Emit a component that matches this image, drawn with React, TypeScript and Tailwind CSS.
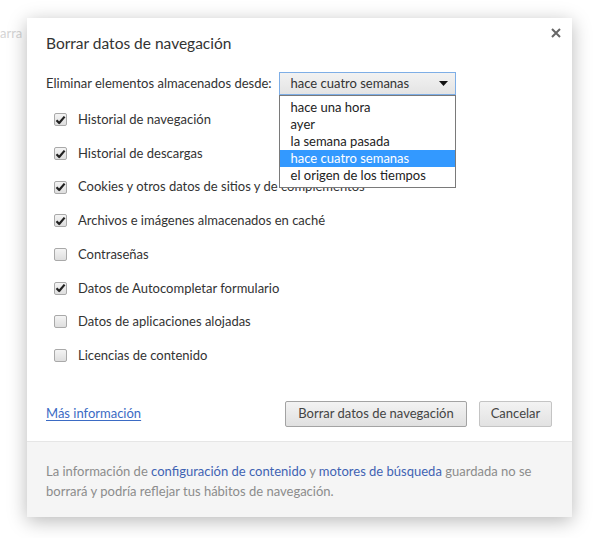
import React from 'react';

const items = [
  { label: 'Historial de navegación', checked: true },
  { label: 'Historial de descargas', checked: true },
  { label: 'Cookies y otros datos de sitios y de complementos', checked: true },
  { label: 'Archivos e imágenes almacenados en caché', checked: true },
  { label: 'Contraseñas', checked: false },
  { label: 'Datos de Autocompletar formulario', checked: true },
  { label: 'Datos de aplicaciones alojadas', checked: false },
  { label: 'Licencias de contenido', checked: false },
];

const options = [
  'hace una hora',
  'ayer',
  'la semana pasada',
  'hace cuatro semanas',
  'el origen de los tiempos',
];

const Checkbox: React.FC<{ checked: boolean }> = ({ checked }) => (
  <span className="flex h-[13px] w-[13px] shrink-0 items-center justify-center rounded-[2px] border border-[#a9a9a9] bg-gradient-to-b from-[#f4f4f4] to-[#dedede]">
    {checked && (
      <svg width="11" height="10" viewBox="0 0 11 10">
        <path d="M1.5 5.2 L4.2 8 L9.6 1.6" fill="none" stroke="#222" strokeWidth="2.2" strokeLinejoin="round" />
      </svg>
    )}
  </span>
);

export default function App() {
  return (
    <div className="relative h-[538px] w-[600px] overflow-hidden bg-white font-['Lato','Liberation_Sans',sans-serif] text-[13px] text-[#333]">
      <span className="absolute left-0 top-[24px] text-[#d4d4d4]">arra</span>

      <div className="pl-[27px] pt-[18px]">
        <div className="relative flex h-[499px] w-[545px] flex-col bg-white shadow-[0_4px_18px_rgba(0,0,0,0.28)]">
          <button className="absolute right-[11px] top-[10px]">
            <svg width="10" height="10" viewBox="0 0 10 10" className="block">
              <path d="M1 1 L9 9 M9 1 L1 9" stroke="#666" strokeWidth="2" />
            </svg>
          </button>

          <div className="flex-1 pl-[19px] pr-[20px] pt-[15px]">
            <h1 className="text-[15.5px] leading-[20px] text-[#333]">Borrar datos de navegación</h1>

            <div className="mt-[19px] flex items-center gap-[7px]">
              <span>Eliminar elementos almacenados desde:</span>
              <div className="relative">
                <div className="flex h-[23px] w-[177px] items-center justify-between border border-[#7eaee6] bg-gradient-to-b from-[#f2f2f2] to-[#e4e4e4] pl-[11px] pr-[7px]">
                  <span>hace cuatro semanas</span>
                  <svg width="9" height="5" viewBox="0 0 9 5">
                    <path d="M0 0 H9 L4.5 5 Z" fill="#111" />
                  </svg>
                </div>
                <ul className="absolute left-0 top-[23px] z-10 w-[177px] border border-[#7a7a7a] bg-white py-[3px]">
                  {options.map((o, i) => (
                    <li
                      key={o}
                      className={`h-[17px] pl-[11px] leading-[17px] ${i === 3 ? 'bg-[#3399ff] text-white' : 'text-[#222]'}`}
                    >
                      {o}
                    </li>
                  ))}
                </ul>
              </div>
            </div>

            <div className="mt-[8px] flex flex-col pl-[8px]">
              {items.map((it) => (
                <label key={it.label} className="flex h-[33.7px] items-center gap-[11px]">
                  <Checkbox checked={it.checked} />
                  <span className="whitespace-nowrap">{it.label}</span>
                </label>
              ))}
            </div>

            <div className="mt-[28px] flex items-center justify-between">
              <a className="text-[#3b6bc4] underline underline-offset-2">Más información</a>
              <div className="flex gap-[12px]">
                <button className="h-[26px] w-[182px] rounded-[2px] border border-[#a3a3a3] bg-gradient-to-b from-[#f3f3f3] to-[#e0e0e0] text-[#444]">
                  Borrar datos de navegación
                </button>
                <button className="h-[26px] w-[73px] rounded-[2px] border border-[#c4c4c4] bg-gradient-to-b from-[#f3f3f3] to-[#e2e2e2] text-[#444]">
                  Cancelar
                </button>
              </div>
            </div>
          </div>

          <div className="h-[76px] border-t border-[#e6e6e6] bg-[#f5f5f5] px-[19px] pt-[19px] leading-[20px] text-[#8c8c8c]">
            <p>
              <span>La información de </span>
              <span className="text-[#3f63b3]">configuración de contenido</span>
              <span> y </span>
              <span className="text-[#3f63b3]">motores de búsqueda</span>
              <span> guardada no se</span>
            </p>
            <p>borrará y podría reflejar tus hábitos de navegación.</p>
          </div>
        </div>
      </div>
    </div>
  );
}
